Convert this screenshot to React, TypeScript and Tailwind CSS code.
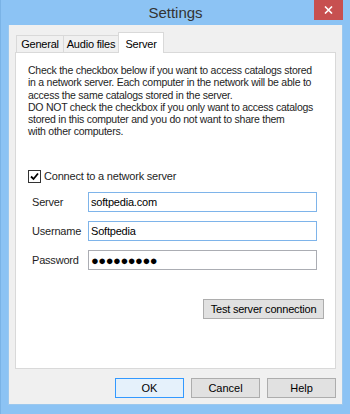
import React from 'react';

const font = { fontFamily: '"Liberation Sans", Arial, sans-serif' };

function Tab({ label, active, w }: { label: string; active?: boolean; w: string }) {
  if (active) {
    return (
      <div className={`${w} h-[21px] -mb-px bg-white border border-[#d9d9d9] border-b-0 flex items-start justify-center pt-[3px] text-[11px] tracking-[-0.2px] text-black z-10`}>
        {label}
      </div>
    );
  }
  return (
    <div className={`${w} h-[17px] bg-[#f0f0f0] border border-[#d9d9d9] border-b-0 -mr-px flex items-center justify-center text-[11px] tracking-[-0.2px] text-black`}>
      {label}
    </div>
  );
}

function Field({ label, value, focused, password }: { label: string; value: string; focused?: boolean; password?: boolean }) {
  return (
    <div className="flex items-center h-[20px]">
      <div className="w-[60px] pl-[4px] text-[11px] tracking-[-0.2px] text-[#1e1e1e]">{label}</div>
      <div
        className={`w-[229px] h-[20px] bg-white border ${focused ? 'border-[#7eb4ea]' : 'border-[#abadb3]'} flex items-center px-[2px] text-[11px] tracking-[-0.2px] text-black`}
      >
        {password ? (
          <span className="tracking-[-0.5px] text-[13px] leading-none">●●●●●●●●●</span>
        ) : (
          value
        )}
      </div>
    </div>
  );
}

function DlgButton({ label, def }: { label: string; def?: boolean }) {
  return (
    <div
      className={`w-[69px] h-[20px] flex items-center justify-center text-[11px] text-black border ${def ? 'border-[#3399ff] bg-[#e5f1fb]' : 'border-[#adadad] bg-[#e1e1e1]'}`}
    >
      {label}
    </div>
  );
}

export default function App() {
  return (
    <div className="w-[350px] h-[414px] bg-[#8cc3f4] flex flex-col border-l border-[#7ab3e6]" style={font}>
      {/* title bar */}
      <div className="relative h-[29px] flex items-center justify-center">
        <span className="text-[15px] text-[#333] pt-[1px]">Settings</span>
        <div className="absolute right-[7px] top-0 w-[29px] h-[20px] bg-[#c75050] flex items-center justify-center">
          <svg width="9" height="8" viewBox="0 0 9 8">
            <path d="M1 0.5 L8 7.5 M8 0.5 L1 7.5" stroke="white" strokeWidth="1.6" />
          </svg>
        </div>
      </div>

      {/* client area */}
      <div className="mx-[7px] mb-[9px] flex-1 bg-[#f0f0f0] flex flex-col pt-[7px] px-[6px] pb-[6px] border border-[#9cc8ee] border-t-0">
        <div className="flex items-end pl-[1px] h-[20px]">
          <Tab label="General" w="w-[48px]" />
          <Tab label="Audio files" w="w-[56px]" />
          <Tab label="Server" w="w-[46px]" active />
        </div>

        <div className="h-[317px] bg-white border border-[#d9d9d9] pt-[11px] pl-[12px] pr-[11px] flex flex-col">
          <div className="text-[10.5px] leading-[12.3px] text-[#1e1e1e] tracking-[-0.25px] whitespace-nowrap">
            <div>Check the checkbox below if you want to access catalogs stored</div>
            <div>in a network server. Each computer in the network will be able to</div>
            <div>access the same catalogs stored in the server.</div>
            <div>DO NOT check the checkbox if you only want to access catalogs</div>
            <div>stored in this computer and you do not want to share them</div>
            <div>with other computers.</div>
          </div>

          <div className="flex items-center gap-[3px] mt-[30px]">
            <div className="w-[13px] h-[13px] border border-[#333] bg-white flex items-center justify-center">
              <svg width="9" height="9" viewBox="0 0 9 9">
                <path d="M1 4.5 L3.5 7 L8 1.5" stroke="black" strokeWidth="1.8" fill="none" />
              </svg>
            </div>
            <span className="text-[11px] tracking-[-0.2px] text-[#1e1e1e]">Connect to a network server</span>
          </div>

          <div className="flex flex-col gap-[9px] mt-[8px]">
            <Field label="Server" value="softpedia.com" focused />
            <Field label="Username" value="Softpedia" focused />
            <Field label="Password" value="" password />
          </div>

          <div className="flex justify-end mt-[29px]">
            <div className="w-[121px] h-[20px] bg-[#e1e1e1] border border-[#adadad] flex items-center justify-center text-[11px] tracking-[-0.2px] text-black">
              Test server connection
            </div>
          </div>
        </div>

        <div className="flex justify-end gap-[7px] mt-[9px]">
          <DlgButton label="OK" def />
          <DlgButton label="Cancel" />
          <DlgButton label="Help" />
        </div>
      </div>
    </div>
  );
}
